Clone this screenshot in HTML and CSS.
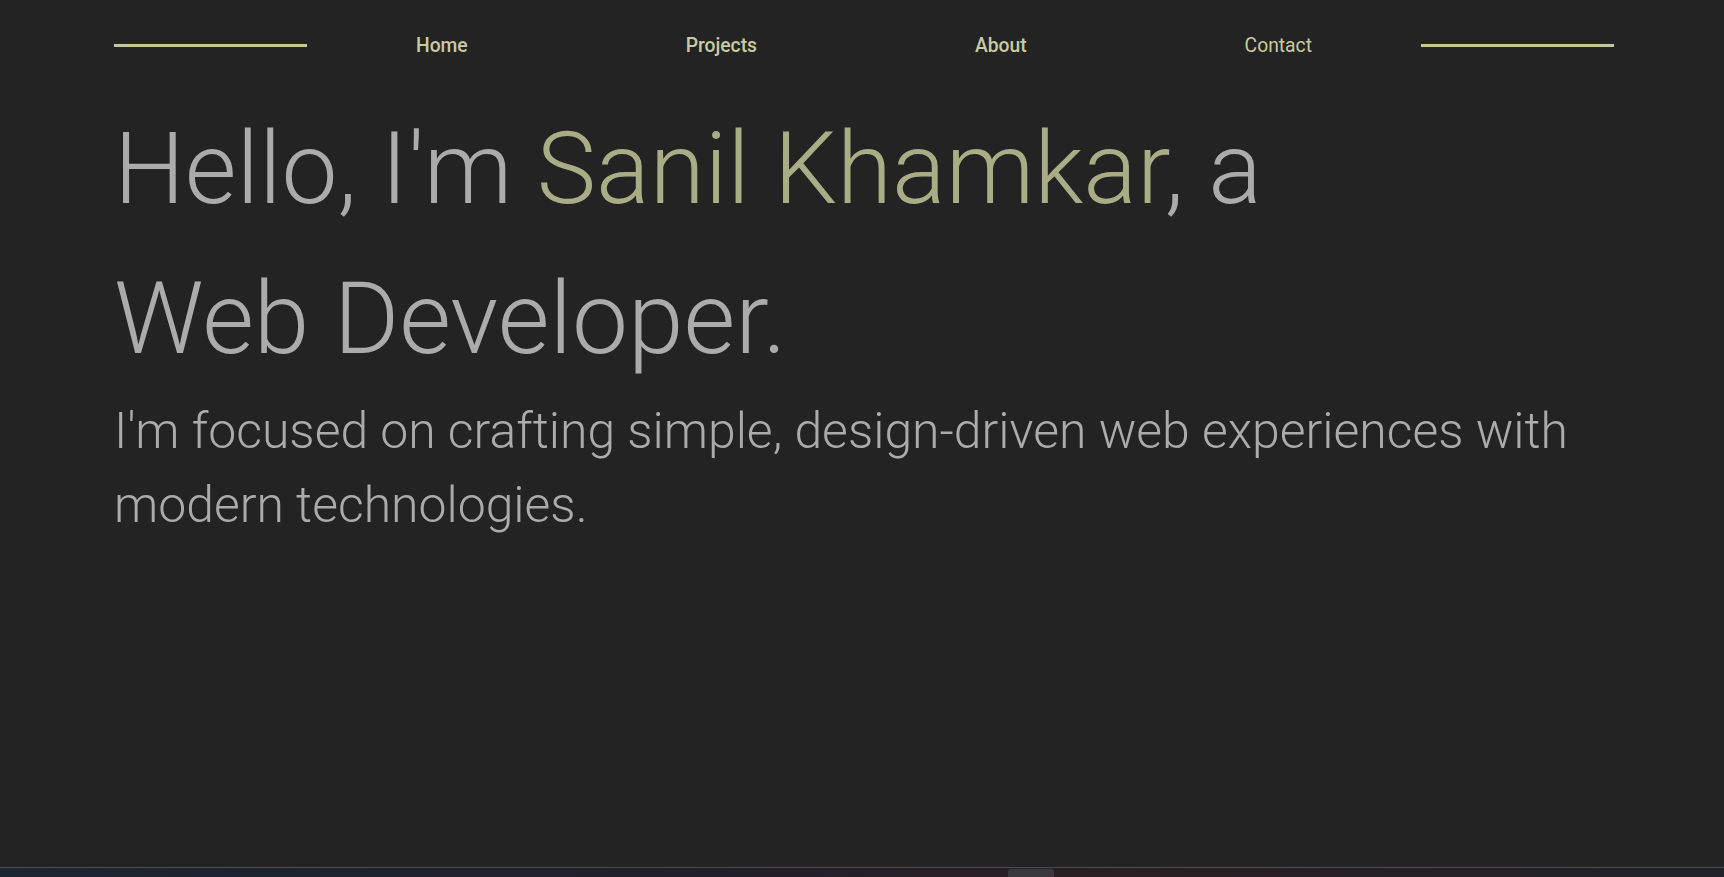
FILE: index.html
```html
<!DOCTYPE html>
<html lang="en">
<head>
<meta charset="utf-8">
<title>Sanil Khamkar</title>
<link rel="stylesheet" href="styles.css">
</head>
<body>
<div class="page">
  <header class="header">
    <span class="rule"></span>
    <nav class="nav">
      <a class="nav-link" href="#">Home</a>
      <a class="nav-link" href="#">Projects</a>
      <a class="nav-link" href="#">About</a>
      <a class="nav-link nav-link--plain" href="#">Contact</a>
    </nav>
    <span class="rule"></span>
  </header>
  <main class="hero">
    <h1 class="hero-title">Hello, I'm <span class="accent">Sanil Khamkar</span>, a<br>Web Developer.</h1>
    <p class="hero-text">I'm focused on crafting simple, design-driven web experiences with modern technologies.</p>
  </main>
</div>
<div class="taskbar"><span class="taskbar-item"></span></div>
</body>
</html>
```

FILE: styles.css
```css
html, body {
  margin: 0;
  padding: 0;
  height: 100%;
}
body {
  background: #232323;
  font-family: Roboto, "Noto Sans", "Liberation Sans", sans-serif;
  display: flex;
  flex-direction: column;
  overflow: hidden;
}
.page {
  flex: 1;
  padding: 0 110px 0 114px;
}
.header {
  height: 90px;
  display: flex;
  align-items: center;
}
.rule {
  width: 193px;
  height: 3px;
  background: #c3c79f;
  flex: none;
}
.nav {
  flex: 1;
  display: flex;
  justify-content: space-around;
  align-items: center;
}
.nav-link {
  color: #c8cba2;
  text-decoration: none;
  font-size: 19.3px;
  font-weight: 500;
}
.nav-link--plain {
  font-weight: 400;
}
.hero {
  padding-top: 4px;
}
.hero-title {
  margin: 0;
  font-size: 100px;
  line-height: 150px;
  font-weight: 300;
  color: #ababab;
}
.accent {
  color: #a9ad86;
}
.hero-text {
  margin: 0;
  font-size: 49.9px;
  line-height: 74px;
  font-weight: 300;
  color: #ababab;
}
.taskbar {
  height: 9px;
  border-top: 1px solid #4d4d4d;
  background: linear-gradient(90deg, #1c2630 0%, #201f2a 40%, #2a1f22 65%, #1f2228 100%);
  display: flex;
  padding-left: 1008px;
}
.taskbar-item {
  width: 46px;
  height: 8px;
  margin-top: 1px;
  border-radius: 3px 3px 0 0;
  background: #3a3a3e;
}
```
